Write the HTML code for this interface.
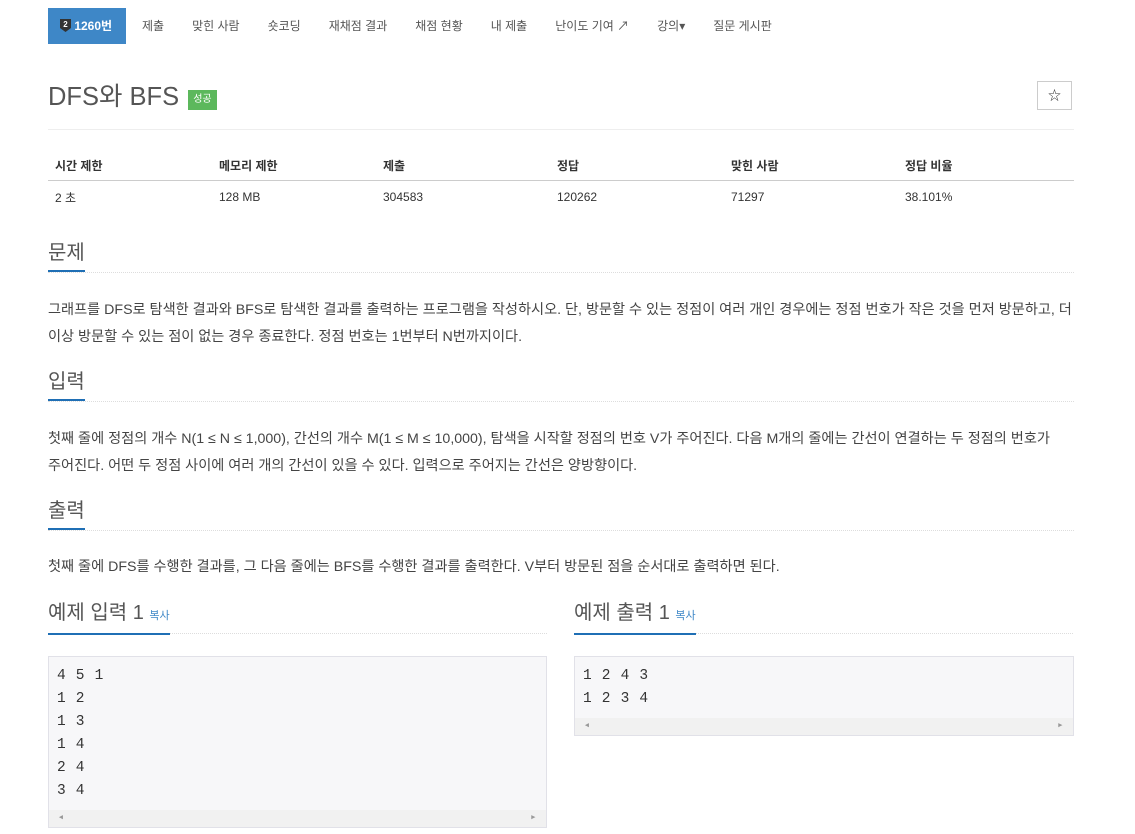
<!DOCTYPE html>
<html><head><meta charset="utf-8"><style>
body{margin:0;background:#fff;font-family:"Liberation Sans","Noto Sans CJK KR",sans-serif;color:#333;font-size:14px}
.c{position:absolute;left:48px;width:1026px}
.nav{top:8px;height:36px;display:flex;font-size:12px}
.nav a{display:block;line-height:36px;padding:0 14px;color:#555;text-decoration:none;white-space:nowrap}
.nav a.act{background:#3e87c7;color:#fff;padding:0 0 0 12px;width:66px;font-weight:bold}
h1{position:absolute;left:48px;top:80px;margin:0;font-size:25.5px;font-weight:normal;color:#555;line-height:34px}
.badge{display:inline-block;background:#5cb85c;color:#fff;font-size:10px;line-height:12px;padding:4px 5px;vertical-align:3px;margin-left:2px}
.star{position:absolute;left:1037px;top:81px;width:35px;height:29px;border:1px solid #ccc;box-sizing:border-box;text-align:center;line-height:27px;font-size:13px}
table{position:absolute;left:48px;top:150px;width:1026px;border-collapse:collapse;font-size:12px}
th{text-align:left;padding:0 7px;height:30px;border-bottom:1px solid #ccc}
td{padding:0 7px;height:32px}
.h{position:absolute;left:48px;width:1026px;border-bottom:1px dotted #ddd;font-size:20px;color:#555;line-height:26px}
.h span.t{display:inline-block;border-bottom:2px solid #1f6fb5;padding-bottom:4px;margin-bottom:-1px}
.p{position:absolute;left:48px;width:1040px;font-size:14.2px;line-height:27px;color:#444;white-space:nowrap}
pre{position:absolute;margin:0;background:#f7f7f9;border:1px solid #e1e1e8;font-family:"Liberation Mono",monospace;font-size:14.5px;line-height:23px;padding:8px 8px 0;box-sizing:border-box;color:#333;letter-spacing:0.7px}
.sb{position:absolute;left:0;right:0;bottom:0;height:17px;background:#f1f1f1;font-size:7px;color:#999;line-height:17px}
.cp{font-size:11px;color:#3e87c7}
</style></head><body>
<div class="c nav"><a class="act"><svg width="11" height="13" viewBox="0 0 11 13" style="vertical-align:-2px"><path d="M0 0h11v9l-5.5 4L0 9z" fill="#333"/><text x="5.5" y="8" font-size="8" fill="#fff" text-anchor="middle" font-family="Liberation Sans">2</text></svg> 1260번</a><a style="padding-left:16px">제출</a><a>맞힌 사람</a><a>숏코딩</a><a>재채점 결과</a><a>채점 현황</a><a>내 제출</a><a>난이도 기여 &#8599;</a><a>강의▾</a><a>질문 게시판</a></div>
<h1>DFS와 BFS <span class="badge">성공</span></h1>
<div class="star">☆</div>
<div class="c" style="top:129px;border-top:1px solid #eee"></div>
<table><tr><th style="width:150px">시간 제한</th><th style="width:150px">메모리 제한</th><th style="width:160px">제출</th><th style="width:160px">정답</th><th style="width:160px">맞힌 사람</th><th>정답 비율</th></tr>
<tr><td>2 초</td><td>128 MB</td><td>304583</td><td>120262</td><td>71297</td><td>38.101%</td></tr></table>
<div class="h" style="top:240px;height:32px"><span class="t">문제</span></div>
<div class="p" style="top:297px">그래프를 DFS로 탐색한 결과와 BFS로 탐색한 결과를 출력하는 프로그램을 작성하시오. 단, 방문할 수 있는 정점이 여러 개인 경우에는 정점 번호가 작은 것을 먼저 방문하고, 더<br>이상 방문할 수 있는 점이 없는 경우 종료한다. 정점 번호는 1번부터 N번까지이다.</div>
<div class="h" style="top:369px;height:32px"><span class="t">입력</span></div>
<div class="p" style="top:426px">첫째 줄에 정점의 개수 N(1 ≤ N ≤ 1,000), 간선의 개수 M(1 ≤ M ≤ 10,000), 탐색을 시작할 정점의 번호 V가 주어진다. 다음 M개의 줄에는 간선이 연결하는 두 정점의 번호가<br>주어진다. 어떤 두 정점 사이에 여러 개의 간선이 있을 수 있다. 입력으로 주어지는 간선은 양방향이다.</div>
<div class="h" style="top:498px;height:32px"><span class="t">출력</span></div>
<div class="p" style="top:554px">첫째 줄에 DFS를 수행한 결과를, 그 다음 줄에는 BFS를 수행한 결과를 출력한다. V부터 방문된 점을 순서대로 출력하면 된다.</div>
<div class="h" style="top:600px;height:33px;width:499px"><span class="t">예제 입력 1 <span class="cp">복사</span></span></div>
<div class="h" style="top:600px;height:33px;width:499px;left:574px"><span class="t">예제 출력 1 <span class="cp">복사</span></span></div>
<pre style="left:48px;top:656px;width:499px;height:172px">4 5 1
1 2
1 3
1 4
2 4
3 4<div class="sb">&nbsp;&nbsp;◀<span style="float:right">▶&nbsp;&nbsp;</span></div></pre>
<pre style="left:574px;top:656px;width:500px;height:80px">1 2 4 3
1 2 3 4<div class="sb">&nbsp;&nbsp;◀<span style="float:right">▶&nbsp;&nbsp;</span></div></pre>
</body></html>
